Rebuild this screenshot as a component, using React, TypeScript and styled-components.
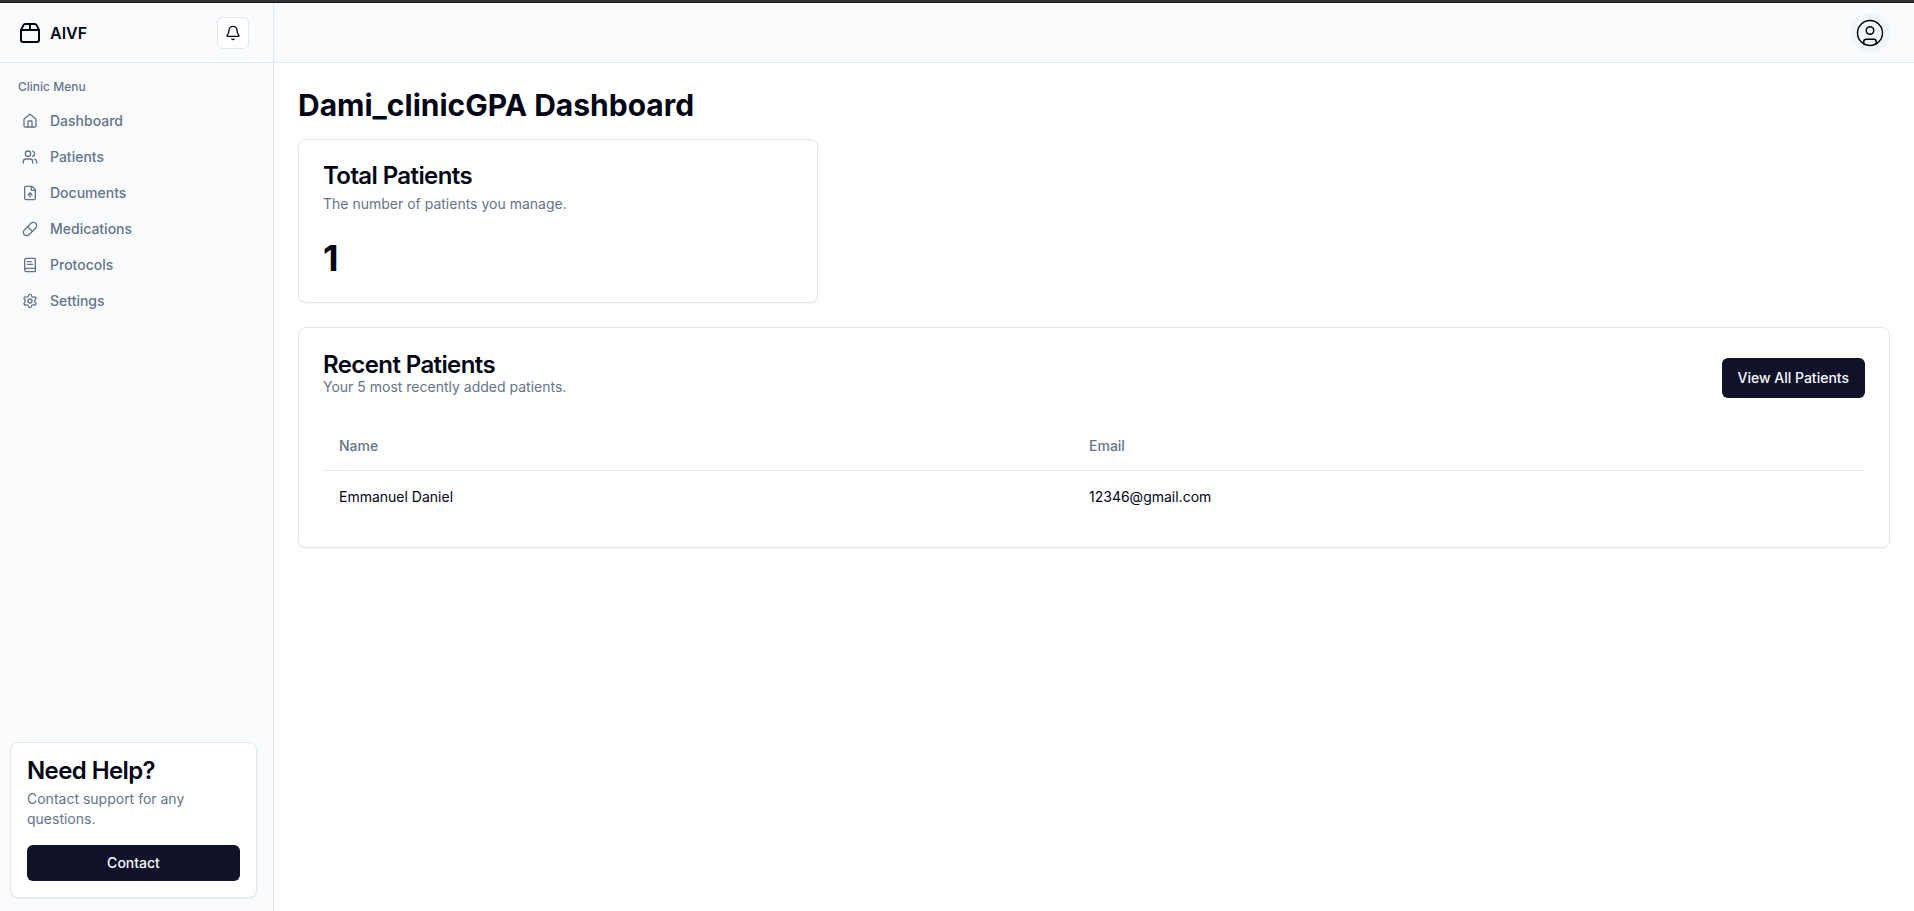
import React from "react";
import styled, { createGlobalStyle } from "styled-components";
import {
  Bell,
  BookText,
  CircleUser,
  FileUp,
  House,
  Package2,
  Pill,
  Settings,
  Users,
  type LucideIcon,
} from "lucide-react";

const c = {
  ink: "#020617",
  muted: "#64748b",
  border: "#e1e7f0",
  panel: "#fafbfd",
  primary: "#10122a",
};

const GlobalStyle = createGlobalStyle`
  *, *::before, *::after { box-sizing: border-box; }
  body { margin: 0; background: #fff; color: ${c.ink}; font-family: Inter, "Liberation Sans", sans-serif; font-size: 14px; line-height: 20px; }
  h1, h2, p { margin: 0; }
  button { font-family: inherit; cursor: pointer; }
`;

const Shell = styled.div`
  height: 100vh;
  display: flex;
  flex-direction: column;
`;

const TopEdge = styled.div`
  height: 3px;
  flex: none;
  background: #333;
  border-bottom: 1px solid #1c1c1c;
`;

const Page = styled.div`
  flex: 1;
  display: grid;
  grid-template-columns: 274px 1fr;
`;

const Sidebar = styled.aside`
  display: flex;
  flex-direction: column;
  background: ${c.panel};
  border-right: 1px solid ${c.border};
`;

const Brand = styled.div`
  height: 60px;
  display: flex;
  align-items: center;
  gap: 8px;
  padding: 0 24px 0 18px;
  border-bottom: 1px solid ${c.border};
`;

const BrandName = styled.span`
  font-size: 16px;
  line-height: 24px;
  font-weight: 600;
`;

const BellButton = styled.button`
  margin-left: auto;
  width: 32px;
  height: 32px;
  padding: 0;
  display: grid;
  place-items: center;
  background: #fff;
  color: ${c.ink};
  border: 1px solid ${c.border};
  border-radius: 6px;
`;

const Nav = styled.nav`
  flex: 1;
  display: flex;
  flex-direction: column;
  padding-top: 8px;
`;

const NavLabel = styled.div`
  height: 32px;
  display: flex;
  align-items: center;
  padding-left: 18px;
  font-size: 12px;
  font-weight: 500;
  color: ${c.muted};
`;

const NavItem = styled.a`
  height: 36px;
  display: flex;
  align-items: center;
  gap: 12px;
  padding-left: 22px;
  font-weight: 500;
  color: ${c.muted};
`;

const Card = styled.section<{ $pad: number }>`
  background: #fff;
  border: 1px solid ${c.border};
  border-radius: 8px;
  box-shadow: 0 1px 2px rgba(0, 0, 0, 0.05);
  padding: ${(p) => p.$pad}px;
`;

const HelpCard = styled(Card)`
  margin: 0 16px 13px 10px;
`;

const CardTitle = styled.h2`
  font-size: 24px;
  line-height: 24px;
  font-weight: 600;
  letter-spacing: -0.6px;
`;

const CardText = styled.p<{ $top?: number }>`
  margin-top: ${(p) => p.$top ?? 0}px;
  color: ${c.muted};
`;

const Button = styled.button<{ $small?: boolean }>`
  height: ${(p) => (p.$small ? 36 : 40)}px;
  padding: 0 ${(p) => (p.$small ? 12 : 16)}px;
  border: 0;
  border-radius: 6px;
  background: ${c.primary};
  color: #f8fafc;
  font-size: 14px;
  line-height: 20px;
  font-weight: 500;
`;

const ContactButton = styled(Button)`
  display: block;
  width: 100%;
  margin-top: 16px;
`;

const Content = styled.div`
  display: flex;
  flex-direction: column;
`;

const TopBar = styled.header`
  height: 60px;
  display: flex;
  align-items: center;
  justify-content: flex-end;
  padding: 0 24px;
  background: ${c.panel};
  border-bottom: 1px solid ${c.border};
`;

const Avatar = styled.button`
  width: 40px;
  height: 40px;
  margin-top: 1px;
  padding: 0;
  display: grid;
  place-items: center;
  border: 0;
  border-radius: 50%;
  background: #f0f5f9;
  color: #000;
`;

const Main = styled.main`
  padding: 24px;
`;

const PageTitle = styled.h1`
  font-size: 30px;
  line-height: 36px;
  font-weight: 700;
`;

const Stats = styled.div`
  display: grid;
  grid-template-columns: repeat(3, 1fr);
  gap: 16px;
  margin: 16px 0 24px;
`;

const StatValue = styled.div`
  margin-top: 24px;
  font-size: 36px;
  line-height: 40px;
  font-weight: 700;
`;

const CardHeader = styled.div`
  display: flex;
  align-items: center;
  justify-content: space-between;
  margin-bottom: 24px;

  ${Button} {
    margin-top: 6px;
  }
`;

const Table = styled.table`
  width: 100%;
  table-layout: fixed;
  border-collapse: collapse;
  text-align: left;
`;

const HeadRow = styled.tr`
  border-bottom: 1px solid ${c.border};
`;

const HeadCell = styled.th<{ $width?: number }>`
  width: ${(p) => (p.$width ? `${p.$width}px` : "auto")};
  height: 48px;
  padding: 0 16px;
  font-weight: 500;
  color: ${c.muted};
`;

const Cell = styled.td`
  padding: 16px;
`;

const menu: { label: string; icon: LucideIcon }[] = [
  { label: "Dashboard", icon: House },
  { label: "Patients", icon: Users },
  { label: "Documents", icon: FileUp },
  { label: "Medications", icon: Pill },
  { label: "Protocols", icon: BookText },
  { label: "Settings", icon: Settings },
];

const patients = [{ name: "Emmanuel Daniel", email: "12346@gmail.com" }];

export default function App() {
  return (
    <Shell>
      <GlobalStyle />
      <TopEdge />
      <Page>
        <Sidebar>
          <Brand>
            <Package2 size={24} />
            <BrandName>AIVF</BrandName>
            <BellButton aria-label="Notifications">
              <Bell size={16} />
            </BellButton>
          </Brand>
          <Nav>
            <NavLabel>Clinic Menu</NavLabel>
            {menu.map(({ label, icon: Icon }) => (
              <NavItem key={label}>
                <Icon size={16} />
                {label}
              </NavItem>
            ))}
          </Nav>
          <HelpCard $pad={16}>
            <CardTitle>Need Help?</CardTitle>
            <CardText $top={6}>Contact support for any questions.</CardText>
            <ContactButton $small>Contact</ContactButton>
          </HelpCard>
        </Sidebar>
        <Content>
          <TopBar>
            <Avatar aria-label="Account">
              <CircleUser size={30} strokeWidth={1.15} />
            </Avatar>
          </TopBar>
          <Main>
            <PageTitle>Dami_clinicGPA Dashboard</PageTitle>
            <Stats>
              <Card $pad={24}>
                <CardTitle>Total Patients</CardTitle>
                <CardText $top={6}>The number of patients you manage.</CardText>
                <StatValue>1</StatValue>
              </Card>
            </Stats>
            <Card $pad={24}>
              <CardHeader>
                <div>
                  <CardTitle>Recent Patients</CardTitle>
                  <CardText>Your 5 most recently added patients.</CardText>
                </div>
                <Button>View All Patients</Button>
              </CardHeader>
              <Table>
                <thead>
                  <HeadRow>
                    <HeadCell $width={750}>Name</HeadCell>
                    <HeadCell>Email</HeadCell>
                  </HeadRow>
                </thead>
                <tbody>
                  {patients.map((p) => (
                    <tr key={p.email}>
                      <Cell>{p.name}</Cell>
                      <Cell>{p.email}</Cell>
                    </tr>
                  ))}
                </tbody>
              </Table>
            </Card>
          </Main>
        </Content>
      </Page>
    </Shell>
  );
}
